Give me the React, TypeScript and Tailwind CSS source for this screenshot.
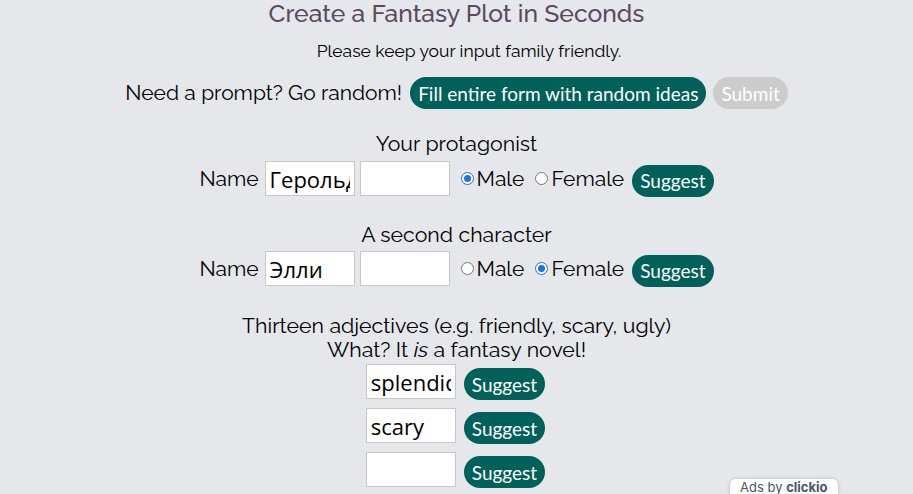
import * as React from "react"

const label = "font-['Raleway','Lato','Open_Sans',sans-serif]"
const btnFont = "font-['Lato','Noto_Sans',sans-serif]"

function Pill({ children, muted }: { children: React.ReactNode; muted?: boolean }) {
  return (
    <button
      type="button"
      className={`h-8 shrink-0 rounded-full px-2 text-[19px] leading-none text-white ${btnFont} ${
        muted ? "bg-[#cccccc]" : "bg-[#00605a]"
      }`}
    >
      {children}
    </button>
  )
}

function TextBox({ value }: { value?: string }) {
  return (
    <input
      type="text"
      defaultValue={value}
      className="h-[35px] w-[90px] border border-[#c8c8c8] bg-white px-[4px] text-[22px] text-black outline-none font-['Open_Sans','Noto_Sans',sans-serif]"
    />
  )
}

function Radio({ checked }: { checked?: boolean }) {
  return (
    <span
      className={`inline-flex h-[13px] w-[13px] items-center justify-center rounded-full border ${
        checked ? "border-[#1a73e8]" : "border-[#767676]"
      } bg-white`}
    >
      {checked && <span className="h-[7px] w-[7px] rounded-full bg-[#1a73e8]" />}
    </span>
  )
}

function CharacterRow({ name, female }: { name: string; female?: boolean }) {
  return (
    <div className={`flex items-center justify-center text-[21px] text-black ${label}`}>
      <span className="mr-[6px]">Name</span>
      <TextBox value={name} />
      <span className="w-[5px]" />
      <TextBox />
      <span className="ml-[11px] flex items-center gap-[3px]">
        <Radio checked={!female} />
        Male
      </span>
      <span className="ml-[11px] flex items-center gap-[3px]">
        <Radio checked={female} />
        Female
      </span>
      <span className="ml-2 mt-[3px] mb-[-1px]">
        <Pill>Suggest</Pill>
      </span>
    </div>
  )
}

function AdjRow({ value }: { value?: string }) {
  return (
    <div className="flex items-center justify-center gap-2 pr-[2px]">
      <TextBox value={value} />
      <span className="mt-[4px] mb-[-1px]">
        <Pill>Suggest</Pill>
      </span>
    </div>
  )
}

export default function App() {
  return (
    <div className="relative h-[494px] w-full overflow-hidden bg-[#e5e7eb]">
      <main className="flex flex-col items-center">
        <h1 className={`mt-[-2px] text-[24.7px] font-medium leading-8 text-[#5b4a5e] ${label}`}>
          Create a Fantasy Plot in Seconds
        </h1>
        <p className={`mt-[11px] pl-[25px] text-[17.5px] leading-5 text-black ${label}`}>
          Please keep your input family friendly.
        </p>

        <div className={`mt-[16px] flex items-center gap-[7px] text-[21px] text-black ${label}`}>
          <span className="mr-[1px]">Need a prompt? Go random!</span>
          <Pill>Fill entire form with random ideas</Pill>
          <Pill muted>Submit</Pill>
        </div>

        <h2 className={`mt-[23px] text-[21.3px] leading-6 text-black ${label}`}>Your protagonist</h2>
        <div className="mt-[5px]">
          <CharacterRow name="Герольд" />
        </div>

        <h2 className={`mt-[27px] text-[21.3px] leading-6 text-black ${label}`}>A second character</h2>
        <div className="mt-[4px]">
          <CharacterRow name="Элли" female />
        </div>

        <div className={`mt-[28px] text-center text-[21.3px] leading-6 text-black ${label}`}>
          <p>Thirteen adjectives (e.g. friendly, scary, ugly)</p>
          <p>
            What? It <i>is</i> a fantasy novel!
          </p>
        </div>
        <div className="mt-[2px] flex flex-col gap-[9px]">
          <AdjRow value="splendid" />
          <AdjRow value="scary" />
          <AdjRow />
        </div>
      </main>

      <div className="absolute top-[479px] left-[730px] rounded-t-md bg-white px-[10px] pt-[2px] pb-[4px] text-[13px] leading-[13px] text-[#4a5568] shadow-[0_0_4px_rgba(0,0,0,0.2)] font-['Inter',sans-serif]">
        Ads by <b>clickio</b>
      </div>
    </div>
  )
}
